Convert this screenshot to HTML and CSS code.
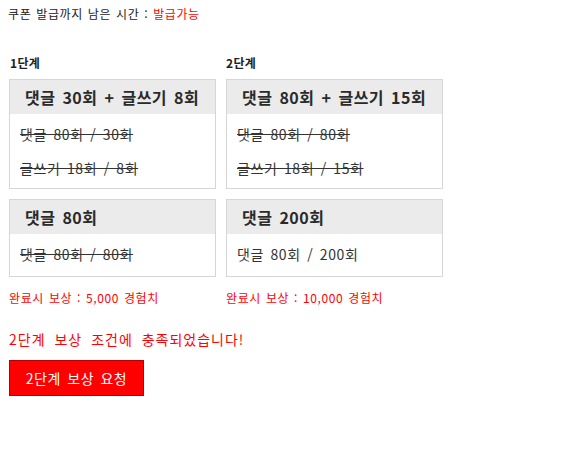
FILE: index.html
```
<!DOCTYPE html>
<html lang="ko">
<head>
<meta charset="utf-8">
<title>쿠폰 발급</title>
<link rel="stylesheet" href="styles.css">
</head>
<body>
<div class="page">
  <p class="timer">쿠폰 발급까지 남은 시간 : <span class="red">발급가능</span></p>
  <div class="stages">
    <div class="stage s1">
      <div class="label">1단계</div>
      <div class="box">
        <div class="head">댓글 30회 + 글쓰기 8회</div>
        <div class="body">
          <div class="line done">댓글 80회 / 30회</div>
          <div class="line done">글쓰기 18회 / 8회</div>
        </div>
      </div>
      <div class="box">
        <div class="head">댓글 80회</div>
        <div class="body single">
          <div class="line done">댓글 80회 / 80회</div>
        </div>
      </div>
      <div class="reward">완료시 보상 : 5,000 경험치</div>
    </div>
    <div class="stage s2">
      <div class="label">2단계</div>
      <div class="box">
        <div class="head">댓글 80회 + 글쓰기 15회</div>
        <div class="body">
          <div class="line done">댓글 80회 / 80회</div>
          <div class="line done">글쓰기 18회 / 15회</div>
        </div>
      </div>
      <div class="box">
        <div class="head">댓글 200회</div>
        <div class="body single">
          <div class="line">댓글 80회 / 200회</div>
        </div>
      </div>
      <div class="reward">완료시 보상 : 10,000 경험치</div>
    </div>
  </div>
  <p class="notice">2단계 보상 조건에 충족되었습니다!</p>
  <button class="req" type="button">2단계 보상 요청</button>
</div>
</body>
</html>
```
FILE: styles.css
```
html, body {
  margin: 0;
  padding: 0;
  background: #ffffff;
}

body {
  font-family: "Noto Sans CJK KR", "Noto Sans", sans-serif;
  color: #222222;
}

.page {
  padding: 6px 0 0 8px;
}

.timer {
  margin: 0;
  font-size: 12px;
  line-height: 15px;
  letter-spacing: 0.6px;
  word-spacing: 1px;
}

.red {
  color: #ff0000;
}

.stages {
  display: flex;
  gap: 10px;
  margin-top: 34px;
  padding-left: 1px;
}

.stage {
  display: flex;
  flex-direction: column;
}

.s1 {
  width: 207px;
}

.s2 {
  width: 217px;
}

.label {
  font-size: 12px;
  font-weight: bold;
  line-height: 15px;
  padding-left: 1px;
  margin-bottom: 9px;
  letter-spacing: 0.3px;
}

.s2 .label {
  padding-left: 0;
}

.box {
  border: 1px solid #d6d6d6;
  margin-bottom: 10px;
}

.head {
  height: 34px;
  line-height: 34px;
  background: #ebebeb;
  font-size: 16px;
  font-weight: bold;
  padding-left: 15px;
  letter-spacing: 0.5px;
  word-spacing: 2px;
  color: #2a2a2a;
}

.body {
  padding: 3px 10px 3px 10px;
}

.body.single {
  padding-bottom: 5px;
}

.line {
  height: 34px;
  line-height: 34px;
  font-size: 14px;
  color: #333333;
  letter-spacing: 0.6px;
  word-spacing: 2px;
}

.line.done {
  text-decoration: line-through;
}

.reward {
  margin-top: 3px;
  font-size: 12px;
  line-height: 15px;
  color: #ff0000;
  letter-spacing: 0.6px;
  word-spacing: 1px;
}

.notice {
  margin: 26px 0 0 1px;
  font-size: 14px;
  line-height: 16px;
  color: #ff0000;
  letter-spacing: 1px;
  word-spacing: 4px;
}

.req {
  display: block;
  margin: 13px 0 0 1px;
  width: 135px;
  height: 36px;
  padding: 0;
  background: #ff0000;
  border: 1px solid #b30000;
  color: #ffffff;
  font-family: "Noto Sans CJK KR", "Noto Sans", sans-serif;
  font-size: 14px;
  letter-spacing: 0.5px;
  word-spacing: 2px;
}
```
